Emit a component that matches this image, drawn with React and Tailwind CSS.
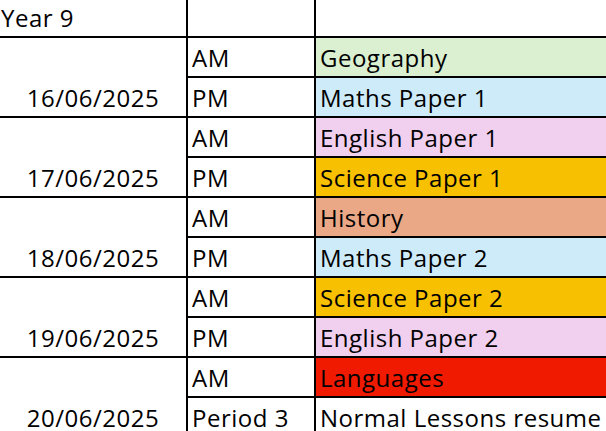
const days = [
  {
    date: "16/06/2025",
    slots: [
      { time: "AM", subject: "Geography", bg: "bg-[#daf0d0]" },
      { time: "PM", subject: "Maths Paper 1", bg: "bg-[#ceebf9]" },
    ],
  },
  {
    date: "17/06/2025",
    slots: [
      { time: "AM", subject: "English Paper 1", bg: "bg-[#f1cfee]" },
      { time: "PM", subject: "Science Paper 1", bg: "bg-[#f7c000]" },
    ],
  },
  {
    date: "18/06/2025",
    slots: [
      { time: "AM", subject: "History", bg: "bg-[#eaa886]" },
      { time: "PM", subject: "Maths Paper 2", bg: "bg-[#ceebf9]" },
    ],
  },
  {
    date: "19/06/2025",
    slots: [
      { time: "AM", subject: "Science Paper 2", bg: "bg-[#f7c000]" },
      { time: "PM", subject: "English Paper 2", bg: "bg-[#f1cfee]" },
    ],
  },
  {
    date: "20/06/2025",
    slots: [
      { time: "AM", subject: "Languages", bg: "bg-[#f01a00]" },
      { time: "Period 3", subject: "Normal Lessons resume", bg: "bg-white" },
    ],
  },
];

const cell = "flex items-end leading-none pb-[6px] border-black";

export default function App() {
  return (
    <div className="w-[606px] h-[431px] overflow-hidden bg-white text-black font-['Open_Sans',sans-serif] text-[24px] tracking-[0.5px]">
      <div className="grid grid-cols-[188px_128px_1fr] grid-rows-[38px_repeat(10,40px)]">
        {/* header row */}
        <div className={`${cell} border-r-2 border-b-2 pl-[1px]`}>Year 9</div>
        <div className={`${cell} border-r-2 border-b-2`}></div>
        <div className={`${cell} border-b-2`}></div>

        {days.map((day) => (
          <div key={day.date} className="contents">
            <div className={`${cell} row-span-2 justify-center border-r-2 border-b-2`}>{day.date}</div>
            {day.slots.map((slot) => (
              <div key={slot.time} className="contents">
                <div className={`${cell} border-r-2 border-b-2 pl-[4px]`}>{slot.time}</div>
                <div className={`${cell} ${slot.bg} border-b-2 pl-[4px] whitespace-nowrap`}>{slot.subject}</div>
              </div>
            ))}
          </div>
        ))}
      </div>
    </div>
  );
}
